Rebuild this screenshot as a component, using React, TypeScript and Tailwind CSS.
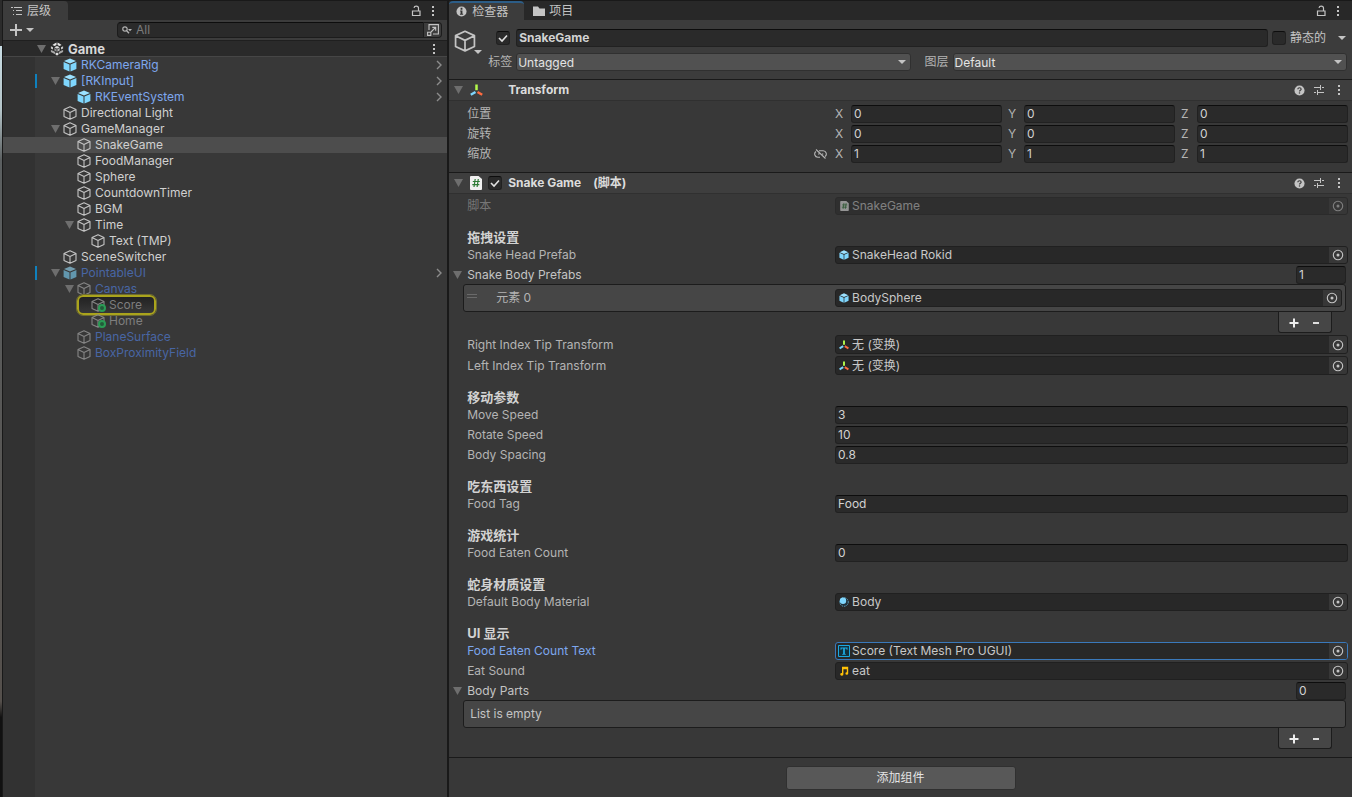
import React, { useId } from "react";
import clsx from "clsx";

/* ---------- icons ---------- */

type IconProps = { className?: string };

function CubeOutline({ className = "size-[14px] text-[#c4c4c4]" }: IconProps) {
  return (
    <svg viewBox="0 0 14 14" fill="none" stroke="currentColor" strokeWidth="1.1" strokeLinejoin="round" className={clsx("shrink-0", className)}>
      <path d="M7 .8 13 3.6v6.9L7 13.3 1 10.5V3.6zM1 3.6l6 3 6-3M7 6.6v6.7" />
    </svg>
  );
}

function CubeFilled({ className = "size-[14px]" }: IconProps) {
  return (
    <svg viewBox="0 0 14 14" className={clsx("shrink-0", className)}>
      <path fill="#9be1ff" d="M7 .4 13 3 7 5.6 1 3z" />
      <path fill="#7fd6fd" d="M.6 4 6.5 6.6v7L.6 11zM13.4 4 7.5 6.6v7l5.9-2.6z" />
    </svg>
  );
}

function Triangle({ className = "w-[9px] text-[#6e6e6e]" }: IconProps) {
  return (
    <svg viewBox="0 0 9 8" className={clsx("shrink-0", className)}>
      <path fill="currentColor" d="M0 0h9L4.500 8z" />
    </svg>
  );
}

function Caret({ className }: IconProps) {
  return (
    <svg viewBox="0 0 8 4" className={clsx("h-1 w-2 shrink-0", className)}>
      <path fill="#c4c4c4" d="M0 0h8L4 4z" />
    </svg>
  );
}

function Chevron() {
  return (
    <svg viewBox="0 0 6 10" className="h-[10px] w-[6px] shrink-0">
      <path d="M1 1l4 4-4 4" fill="none" stroke="#8c8c8c" strokeWidth="1.400" />
    </svg>
  );
}

function Dots() {
  return (
    <svg viewBox="0 0 4 12" className="h-3 w-1 shrink-0">
      <path fill="#c4c4c4" d="M1 1h2v2H1zM1 5h2v2H1zM1 9h2v2H1z" />
    </svg>
  );
}

function LockOpen() {
  return (
    <svg viewBox="0 0 10 12" className="h-3 w-[10px] shrink-0" fill="none" stroke="#c4c4c4" strokeWidth="1.200">
      <path d="M1.500 6h7.500v4.500H1.500zM3 2.800C3.200 1.700 4 1.200 5.200 1.200c1.500 0 2.300.8 2.300 2V6" />
    </svg>
  );
}

function ListIcon() {
  return (
    <svg viewBox="0 0 12 10" className="h-[10px] w-3 shrink-0" fill="#c4c4c4">
      <path d="M0 1h2v1H0zM3 1h8v1H3zM2 4h1v1H2zM5 4h6v1H5zM2 8h1v1H2zM5 8h6v1H5z" />
    </svg>
  );
}

function InfoIcon() {
  return (
    <svg viewBox="0 0 12 12" className="size-[11px] shrink-0">
      <circle cx="6" cy="6" r="5.500" fill="#c4c4c4" />
      <path fill="#333" d="M5 2h2v2H5zM4.500 5H7v3.500h.8v1H4.300v-1H5V6h-.5z" />
    </svg>
  );
}

function FolderIcon() {
  return (
    <svg viewBox="0 0 12 10" className="h-[10px] w-3 shrink-0">
      <path fill="#c4c4c4" d="M0 .5h5l1.500 2H12V10H0z" />
    </svg>
  );
}

function PlusIcon({ className = "size-3" }: IconProps) {
  return (
    <svg viewBox="0 0 12 12" className={clsx("shrink-0", className)}>
      <path fill="#c4c4c4" d="M5 0h2v5h5v2H7v5H5V7H0V5h5z" />
    </svg>
  );
}

function SearchIcon() {
  return (
    <svg viewBox="0 0 10 8" className="h-2 w-[10px] shrink-0">
      <circle cx="3" cy="3" r="2.200" fill="none" stroke="#b4b4b4" strokeWidth="1.200" />
      <path d="M4.500 4.500 7 7.300" stroke="#b4b4b4" strokeWidth="1.300" />
      <path fill="#b4b4b4" d="M6 3h4L8 5.200z" />
    </svg>
  );
}

function PopOutIcon() {
  return (
    <svg viewBox="0 0 12 12" className="size-3 shrink-0" fill="none" stroke="#c4c4c4" strokeWidth="1.100">
      <path d="M2 6V.6h9.400V10H6" />
      <path d="M.6 8.200h3.200v3.200H.6zM4 8l4.600-4.600M5.300 3.400h3.400v3.400" />
    </svg>
  );
}

function UnityLogo() {
  return (
    <svg viewBox="0 0 14 14" className="size-[14px] shrink-0">
      <path fill="#e6e6e6" d="M4.200 1.700 6.500.6v2.300L4.600 3.900 2.400 3zM9.800 1.700 7.500.6v2.300l1.900 1 2.200-.9z" />
      <path fill="#dcdcdc" d="M4.300 5.300 7 4l2.700 1.300L7 6.700z" />
      <path fill="#8f8f8f" d="M4.300 6.100 6.600 7.300v2.500L4.300 8.600z" />
      <path fill="#b5b5b5" d="M9.700 6.100 7.400 7.300v2.500l2.300-1.200z" />
      <path fill="#c8c8c8" d="M.9 4.200 3 5.200v2.300L.9 6.600zM13.100 4.200 11 5.200v2.300l2.100-.9z" />
      <path fill="#a8a8a8" d="M.9 7.900 3 8.800l2.200 1.300v2.200L.9 10.100zM13.100 7.900 11 8.800l-2.200 1.300v2.200l4.300-2.200z" />
      <path fill="#dcdcdc" d="M5.600 11.200 7 10.500l1.400.7v1.600L7 13.500l-1.400-.7z" />
    </svg>
  );
}

function AxesIcon({ className = "size-[13px]" }: IconProps) {
  return (
    <svg viewBox="0 0 13 13" className={clsx("shrink-0", className)} strokeWidth="2.500">
      <path d="M6.500.5v5.700" stroke="#b4fa4b" />
      <path d="M5.500 8 .8 10.800" stroke="#7fd6fd" />
      <path d="M7.500 8l4.700 2.800" stroke="#ff6b40" />
    </svg>
  );
}

function ScriptIcon({ className = "h-[14px] w-3" }: IconProps) {
  return (
    <svg viewBox="0 0 12 14" className={clsx("shrink-0", className)}>
      <path fill="#f0f0f0" d="M1 0h7.500L12 3v10a1 1 0 0 1-1 1H1a1 1 0 0 1-1-1V1a1 1 0 0 1 1-1z" />
      <path d="M5.200 3 4 11M8.300 3 7.100 11M2.800 5.500h7M2.300 8.600h7" stroke="#2d7a35" strokeWidth="1.200" />
    </svg>
  );
}

function MaterialIcon() {
  return (
    <svg viewBox="0 0 10 10" className="size-[10px] shrink-0">
      <circle cx="5" cy="5" r="4.300" fill="#20303a" stroke="#5fa3c0" strokeWidth="1" strokeDasharray="1.500 1" />
      <circle cx="4" cy="3.800" r="3.200" fill="#7fd6fd" />
    </svg>
  );
}

function TmpIcon() {
  return (
    <svg viewBox="0 0 12 12" className="size-3 shrink-0">
      <path fill="#14303c" stroke="#1ba8e0" d="M.5.5h11v11H.5z" />
      <path fill="#1ba8e0" d="M2.500 2.500h7v2.200h-.8l-.5-1.200H6.900v5.200l.9.300v.7H4.200V9l.9-.3V3.500H3.800l-.5 1.200h-.8z" />
    </svg>
  );
}

function AudioIcon() {
  return (
    <svg viewBox="0 0 10 10" className="size-[10px] shrink-0">
      <path fill="#ffc107" d="M3 .8h6.200v6.700a1.400 1.200 0 1 1-1.400-1.200V3.200H4.400v4.900A1.600 1.400 0 1 1 3 6.900z" />
    </svg>
  );
}

function PickerIcon() {
  return (
    <svg viewBox="0 0 12 12" className="size-3 shrink-0">
      <circle cx="6" cy="6" r="4.700" fill="none" stroke="#c4c4c4" strokeWidth="1.100" />
      <circle cx="6" cy="6" r="1.500" fill="#c4c4c4" />
    </svg>
  );
}

function HelpIcon() {
  return (
    <svg viewBox="0 0 12 12" className="size-[11px] shrink-0">
      <circle cx="6" cy="6" r="5.500" fill="#c4c4c4" />
      <path d="M4.200 4.700C4.200 3.500 5 3 6 3s1.800.6 1.800 1.500C7.800 5.700 6 5.600 6 7" fill="none" stroke="#3e3e3e" strokeWidth="1.300" />
      <path fill="#3e3e3e" d="M5.300 8h1.400v1.400H5.300z" />
    </svg>
  );
}

function PresetIcon() {
  return (
    <svg viewBox="0 0 12 12" className="size-3 shrink-0" fill="#c4c4c4">
      <path d="M1 3h6v1H1zM7 1h1v5H7zM9 3h2v1H9zM1 8h2v1H1zM4 6h1v5H4zM5 8h6v1H5z" />
    </svg>
  );
}

function UnlinkIcon() {
  return (
    <svg viewBox="0 0 13 10" className="h-[10px] w-[13px] shrink-0" fill="none" stroke="#b4b4b4" strokeWidth="1.100">
      <path d="M6 8.200H3.800a3.200 3.200 0 0 1-1.900-5.700M5 1.800h4.200a3.200 3.200 0 0 1 1.900 5.700M4 5h1.500M8 5h1.300M2 .5l9.500 9" />
    </svg>
  );
}

/* ---------- hierarchy ---------- */

type Kind = "object" | "prefab" | "added";

interface TreeNode {
  name: string;
  depth: number;
  kind?: Kind;
  tone?: "normal" | "prefab" | "dim" | "dimPrefab";
  open?: boolean;
  enter?: boolean;
  changed?: boolean;
  selected?: boolean;
  pinged?: boolean;
}

const NODES: TreeNode[] = [
  { name: "RKCameraRig", depth: 1, kind: "prefab", tone: "prefab", enter: true },
  { name: "[RKInput]", depth: 1, kind: "prefab", tone: "prefab", open: true, enter: true, changed: true },
  { name: "RKEventSystem", depth: 2, kind: "prefab", tone: "prefab", enter: true },
  { name: "Directional Light", depth: 1 },
  { name: "GameManager", depth: 1, open: true },
  { name: "SnakeGame", depth: 2, selected: true },
  { name: "FoodManager", depth: 2 },
  { name: "Sphere", depth: 2 },
  { name: "CountdownTimer", depth: 2 },
  { name: "BGM", depth: 2 },
  { name: "Time", depth: 2, open: true },
  { name: "Text (TMP)", depth: 3 },
  { name: "SceneSwitcher", depth: 1 },
  { name: "PointableUI", depth: 1, kind: "prefab", tone: "dimPrefab", open: true, enter: true, changed: true },
  { name: "Canvas", depth: 2, tone: "dimPrefab", open: true },
  { name: "Score", depth: 3, kind: "added", tone: "dim", pinged: true },
  { name: "Home", depth: 3, kind: "added", tone: "dim" },
  { name: "PlaneSurface", depth: 2, tone: "dimPrefab" },
  { name: "BoxProximityField", depth: 2, tone: "dimPrefab" },
];

const TONES = {
  normal: "text-[#d0d0d0]",
  prefab: "text-[#7da7ee]",
  dim: "text-[#7e7e7e]",
  dimPrefab: "text-[#4866a4]",
};

const INDENTS = ["", "pl-[14px]", "pl-[28px]", "pl-[42px]"];

function NodeIcon({ kind = "object", dim }: { kind?: Kind; dim: boolean }) {
  if (kind === "prefab") return <CubeFilled className={clsx("size-[14px]", dim && "opacity-60")} />;
  return (
    <span className="relative flex">
      <CubeOutline className={clsx("size-[14px]", dim ? "text-[#858585]" : "text-[#c4c4c4]")} />
      {kind === "added" && (
        <span className="absolute -right-px bottom-0 size-2 rounded-full border-2 border-[#2a9c55] bg-[#235a3a]" />
      )}
    </span>
  );
}

function TreeRow({ node }: { node: TreeNode }) {
  const tone = node.tone ?? "normal";
  return (
    <li className={clsx("flex h-4", node.selected && "bg-[#4d4d4d]")}>
      <span className={clsx("w-8 shrink-0", !node.selected && "bg-[#323232]")} />
      <span className={clsx("my-px w-0.5 shrink-0", node.changed && "bg-[#0f81be]")} />
      <button type="button" className={clsx("flex min-w-0 flex-1 items-center text-left", INDENTS[node.depth])}>
        <span className="flex w-3 shrink-0">{node.open && <Triangle />}</span>
        <span className="relative">
          {node.pinged && (
            <span className="absolute -inset-x-[14px] -inset-y-[2px] rounded-md border-2 border-[#aaa41c] bg-gradient-to-b from-[#222222] to-[#383838] outline outline-[#6e6b32]" />
          )}
          <span className="relative flex items-center gap-1">
            <NodeIcon kind={node.kind} dim={tone === "dim" || tone === "dimPrefab"} />
            <span className={clsx("leading-4 whitespace-nowrap", TONES[tone])}>{node.name}</span>
          </span>
        </span>
      </button>
      {node.enter && (
        <button type="button" aria-label={`Open ${node.name}`} className="flex items-center pr-[5px]">
          <Chevron />
        </button>
      )}
    </li>
  );
}

function Hierarchy() {
  return (
    <section className="flex w-[33%] shrink-0 flex-col border-x border-[#191919] bg-[#383838]">
      <header className="flex h-5 items-stretch border-t border-[#191919] bg-[#282828]">
        <button type="button" className="flex items-center gap-1 rounded-tr bg-[#3c3c3c] pr-[17px] pl-[8px] text-[#c4c4c4]">
          <ListIcon />
          层级
        </button>
        <div className="ml-auto flex items-center gap-[10px] pr-3">
          <button type="button" aria-label="Lock"><LockOpen /></button>
          <button type="button" aria-label="Hierarchy menu"><Dots /></button>
        </div>
      </header>

      <div className="flex h-5 items-center bg-[#3c3c3c] pr-[5px]">
        <button type="button" aria-label="Create" className="flex w-[114px] shrink-0 items-center gap-1 pl-[7px]">
          <PlusIcon />
          <Caret />
        </button>
        <label className="flex h-4 min-w-0 flex-1 items-center gap-1 rounded-l border border-[#1c1c1c] border-t-[#0d0d0d] bg-[#2a2a2a] pl-1">
          <SearchIcon />
          <input aria-label="Search" placeholder="All" className="w-full min-w-0 bg-transparent outline-none placeholder:text-[#7c7c7c]" />
        </label>
        <button type="button" aria-label="Open search" className="flex h-4 w-[18px] items-center justify-center rounded-r border border-l-0 border-[#1c1c1c] bg-[#3c3c3c]">
          <PopOutIcon />
        </button>
      </div>

      <div className="flex h-[17px] items-center border-y border-y-[#1f1f1f] border-b-[#464646] bg-[#2a2a2a] pr-[11px] pl-[34px]">
        <button type="button" className="flex items-center gap-1 text-[13px] font-bold text-[#d8d8d8]">
          <Triangle />
          <UnityLogo />
          Game
        </button>
        <button type="button" aria-label="Scene menu" className="ml-auto"><Dots /></button>
      </div>

      <ul>
        {NODES.map((node) => (
          <TreeRow key={node.name} node={node} />
        ))}
      </ul>
      <div className="w-8 flex-1 bg-[#323232]" />
    </section>
  );
}

/* ---------- inspector ---------- */

const ROW = "grid grid-cols-[368fr_513fr] pr-1 pl-[18px]";
const INPUT =
  "h-[18px] w-full min-w-0 rounded-[3px] border border-[#212121] border-t-[#0d0d0d] bg-[#2a2a2a] px-0.5 text-[#d2d2d2] outline-none";

function Check({ label, checked }: { label: string; checked?: boolean }) {
  return (
    <span className="relative flex size-[14px] shrink-0">
      <input
        type="checkbox"
        aria-label={label}
        defaultChecked={checked}
        className="peer size-[14px] appearance-none rounded-[3px] border border-[#212121] border-t-[#0d0d0d] bg-[#2a2a2a]"
      />
      <svg viewBox="0 0 14 14" className="pointer-events-none absolute inset-0 hidden size-[14px] peer-checked:block">
        <path d="M3 7l3 3 5-5.500" fill="none" stroke="#e0e0e0" strokeWidth="1.600" />
      </svg>
    </span>
  );
}

function Dropdown({ id, value }: { id: string; value: string }) {
  return (
    <span className="relative flex min-w-0 flex-1 items-center">
      <select
        id={id}
        defaultValue={value}
        className="h-[18px] w-full appearance-none rounded-[3px] border border-[#303030] bg-[#515151] px-px text-[#e4e4e4]"
      >
        <option>{value}</option>
      </select>
      <span className="pointer-events-none absolute right-[5px] flex">
        <Caret />
      </span>
    </span>
  );
}

function ObjectHeader() {
  return (
    <div className="flex bg-[#3c3c3c] pt-[9px] pb-2">
      <button type="button" aria-label="Object icon" className="flex w-9 shrink-0 items-start pt-px pl-[5px]">
        <CubeOutline className="size-[22px] text-[#c4c4c4]" />
        <Caret className="-ml-0.5 mt-5" />
      </button>
      <div className="flex min-w-0 flex-1 flex-col gap-[6px]">
        <div className="flex items-center pl-[11px]">
          <Check label="Active" checked />
          <input
            aria-label="Name"
            defaultValue="SnakeGame"
            className={clsx(INPUT, "ml-[6px] flex-1 font-bold")}
          />
          <div className="ml-1 flex items-center gap-1 pr-[6px] text-[#c4c4c4]">
            <Check label="静态的" />
            <button type="button" className="flex items-center gap-3 whitespace-nowrap">
              静态的
              <Caret />
            </button>
          </div>
        </div>
        <div className="grid grid-cols-[426fr_423fr] gap-[14px] pr-[5px]">
          <div className="flex items-center gap-1 pl-[3px]">
            <label htmlFor="tag" className="text-[#b4b4b4]">标签</label>
            <Dropdown id="tag" value="Untagged" />
          </div>
          <div className="flex items-center gap-1">
            <label htmlFor="layer" className="text-[#b4b4b4]">图层</label>
            <Dropdown id="layer" value="Default" />
          </div>
        </div>
      </div>
    </div>
  );
}

function ComponentHeader({ icon, check, children }: { icon: React.ReactNode; check?: boolean; children: React.ReactNode }) {
  return (
    <header className="flex h-[22px] items-center border-y border-t-[#1a1a1a] border-b-[#303030] bg-[#3e3e3e] pr-[5px] pl-[5px]">
      <button type="button" aria-label="Fold" className="flex"><Triangle /></button>
      <span className="ml-[6px] flex w-[14px] justify-center">{icon}</span>
      <span className="ml-[5px] flex w-5">{check && <Check label="Enabled" checked />}</span>
      <h2 className="flex gap-3 font-bold text-[#dcdcdc]">{children}</h2>
      <div className="ml-auto flex items-center gap-1">
        <button type="button" aria-label="Help" className="flex w-4 justify-center"><HelpIcon /></button>
        <button type="button" aria-label="Presets" className="flex w-4 justify-center"><PresetIcon /></button>
        <button type="button" aria-label="Component menu" className="flex w-4 justify-center"><Dots /></button>
      </div>
    </header>
  );
}

function VectorRow({ label, value, unlinked }: { label: string; value: string; unlinked?: boolean }) {
  return (
    <div className={ROW}>
      <div className="flex items-center justify-between pr-2 text-[#b4b4b4]">
        {label}
        {unlinked && <button type="button" aria-label="Constrain proportions"><UnlinkIcon /></button>}
      </div>
      <div className="grid grid-cols-3 gap-[6px]">
        {["X", "Y", "Z"].map((axis) => (
          <label key={axis} className="flex min-w-0 items-center text-[#b4b4b4]">
            <span className="w-4 shrink-0">{axis}</span>
            <input defaultValue={value} className={INPUT} />
          </label>
        ))}
      </div>
    </div>
  );
}

function TextRow({ label, value }: { label: string; value: string }) {
  const id = useId();
  return (
    <div className={ROW}>
      <label htmlFor={id} className="text-[#b4b4b4]">{label}</label>
      <input id={id} defaultValue={value} className={INPUT} />
    </div>
  );
}

interface ObjectFieldProps {
  id: string;
  icon: React.ReactNode;
  value: string;
  tall?: boolean;
  active?: boolean;
}

function ObjectField({ id, icon, value, tall, active }: ObjectFieldProps) {
  return (
    <div
      className={clsx(
        "flex min-w-0 items-center overflow-hidden rounded-[3px] border bg-[#282828]",
        tall ? "h-[19px]" : "h-[18px]",
        active ? "border-[#3a79bb]" : "border-[#202020]"
      )}
    >
      <span className="flex w-4 shrink-0 justify-center">{icon}</span>
      <input id={id} readOnly value={value} className="min-w-0 flex-1 bg-transparent text-[#c8c8c8] outline-none" />
      <button type="button" aria-label="Pick object" className="flex h-full w-[18px] items-center justify-center bg-[#373737]">
        <PickerIcon />
      </button>
    </div>
  );
}

function ObjectRow({ label, disabled, ...field }: Omit<ObjectFieldProps, "id"> & { label: string; disabled?: boolean }) {
  const id = useId();
  return (
    <div className={clsx(ROW, "items-center", disabled && "opacity-50")}>
      <label htmlFor={id} className={field.active ? "text-[#7da7ee]" : "text-[#b4b4b4]"}>{label}</label>
      <ObjectField id={id} {...field} />
    </div>
  );
}

function SectionTitle({ children }: { children: React.ReactNode }) {
  return <h3 className="flex h-[27px] items-end pl-[18px] text-[13px] leading-[14px] font-bold text-[#d2d2d2]">{children}</h3>;
}

function ArrayBlock({ label, count, children }: { label: string; count: string; children: React.ReactNode }) {
  const id = useId();
  return (
    <div>
      <div className="flex h-[18px] items-center pr-[6px] pl-1">
        <button type="button" aria-label={`Fold ${label}`} className="flex"><Triangle /></button>
        <label htmlFor={id} className="flex-1 pl-[5px] text-[#c4c4c4]">{label}</label>
        <span className="flex w-[50px]">
          <input id={id} defaultValue={count} className={INPUT} />
        </span>
      </div>
      <div className="mr-[6px] ml-[14px] flex h-7 flex-col justify-center rounded-[3px] border border-[#1c1c1c] bg-[#464646]">
        {children}
      </div>
      <div className="mr-5 ml-auto flex h-[21px] w-[54px] justify-around rounded-b-[3px] border border-t-0 border-[#1c1c1c] bg-[#464646] px-1 pt-0.5">
        <button type="button" aria-label="Add" className="flex w-[22px] items-center justify-center">
          <svg viewBox="0 0 10 10" className="size-[10px]">
            <path fill="#eeeeee" d="M4 0.500h2V4h3.500v2H6v3.500H4V6H.5V4H4z" />
          </svg>
        </button>
        <button type="button" aria-label="Remove" className="flex w-[22px] items-center justify-center">
          <span className="h-0.5 w-[6px] bg-[#dddddd]" />
        </button>
      </div>
    </div>
  );
}

function Inspector() {
  return (
    <section className="flex min-w-0 flex-1 flex-col border-l border-[#191919] bg-[#383838]">
      <header className="flex h-5 items-stretch border-t border-[#191919] bg-[#282828]">
        <button type="button" className="flex items-center gap-[5px] rounded-t border-t-2 border-[#2c5d87] bg-[#3c3c3c] pr-4 pl-[7px] text-[#c4c4c4]">
          <InfoIcon />
          检查器
        </button>
        <button type="button" className="flex items-center gap-1 pl-[9px] text-[#c4c4c4]">
          <FolderIcon />
          项目
        </button>
        <div className="ml-auto flex items-center gap-[10px] pr-3">
          <button type="button" aria-label="Lock"><LockOpen /></button>
          <button type="button" aria-label="Inspector menu"><Dots /></button>
        </div>
      </header>

      <ObjectHeader />

      <ComponentHeader icon={<AxesIcon />}>Transform</ComponentHeader>
      <div className="flex flex-col gap-0.5 pt-1 pb-[9px]">
        <VectorRow label="位置" value="0" />
        <VectorRow label="旋转" value="0" />
        <VectorRow label="缩放" value="1" unlinked />
      </div>

      <ComponentHeader icon={<ScriptIcon />} check>
        <span>Snake Game</span>
        <span>(脚本)</span>
      </ComponentHeader>
      <div className="flex flex-col gap-0.5 border-b border-[#1a1a1a] pt-[3px] pb-2">
        <ObjectRow label="脚本" value="SnakeGame" icon={<ScriptIcon className="h-[10px] w-[9px]" />} disabled />

        <SectionTitle>拖拽设置</SectionTitle>
        <ObjectRow label="Snake Head Prefab" value="SnakeHead Rokid" icon={<CubeFilled className="size-[10px]" />} />
        <ArrayBlock label="Snake Body Prefabs" count="1">
          <div className="grid grid-cols-[368fr_507fr] items-center pr-[3px] pl-[3px]">
            <label htmlFor="element-0" className="flex items-center gap-[19px] text-[#b4b4b4]">
              <span className="mb-1 h-1 w-[10px] border-y border-[#6a6a6a]" />
              元素 0
            </label>
            <ObjectField id="element-0" value="BodySphere" icon={<CubeFilled className="size-[10px]" />} />
          </div>
        </ArrayBlock>
        <ObjectRow label="Right Index Tip Transform" value="无 (变换)" icon={<AxesIcon className="size-[10px]" />} tall />
        <ObjectRow label="Left Index Tip Transform" value="无 (变换)" icon={<AxesIcon className="size-[10px]" />} tall />

        <SectionTitle>移动参数</SectionTitle>
        <TextRow label="Move Speed" value="3" />
        <TextRow label="Rotate Speed" value="10" />
        <TextRow label="Body Spacing" value="0.8" />

        <SectionTitle>吃东西设置</SectionTitle>
        <TextRow label="Food Tag" value="Food" />

        <SectionTitle>游戏统计</SectionTitle>
        <TextRow label="Food Eaten Count" value="0" />

        <SectionTitle>蛇身材质设置</SectionTitle>
        <ObjectRow label="Default Body Material" value="Body" icon={<MaterialIcon />} />

        <SectionTitle>UI 显示</SectionTitle>
        <ObjectRow label="Food Eaten Count Text" value="Score (Text Mesh Pro UGUI)" icon={<TmpIcon />} active />
        <ObjectRow label="Eat Sound" value="eat" icon={<AudioIcon />} />
        <ArrayBlock label="Body Parts" count="0">
          <p className="pl-[6px] text-[#c4c4c4]">List is empty</p>
        </ArrayBlock>
      </div>

      <button type="button" className="mx-auto mt-2 h-6 w-[230px] rounded-[3px] border border-[#303030] bg-[#585858] text-[#e4e4e4]">
        添加组件
      </button>
    </section>
  );
}

export default function App() {
  return (
    <main className="flex min-h-screen bg-[#191919] font-['Inter','Noto_Sans_CJK_SC',sans-serif] text-xs leading-[18px]">
      <div className="w-0.5 shrink-0 bg-[linear-gradient(#2b2b2b_46px,#c9dde4_46px,#b4c4c8_110px,#5b5f60_160px,#55504c_88%,#111111_90%)]" />
      <Hierarchy />
      <Inspector />
    </main>
  );
}
